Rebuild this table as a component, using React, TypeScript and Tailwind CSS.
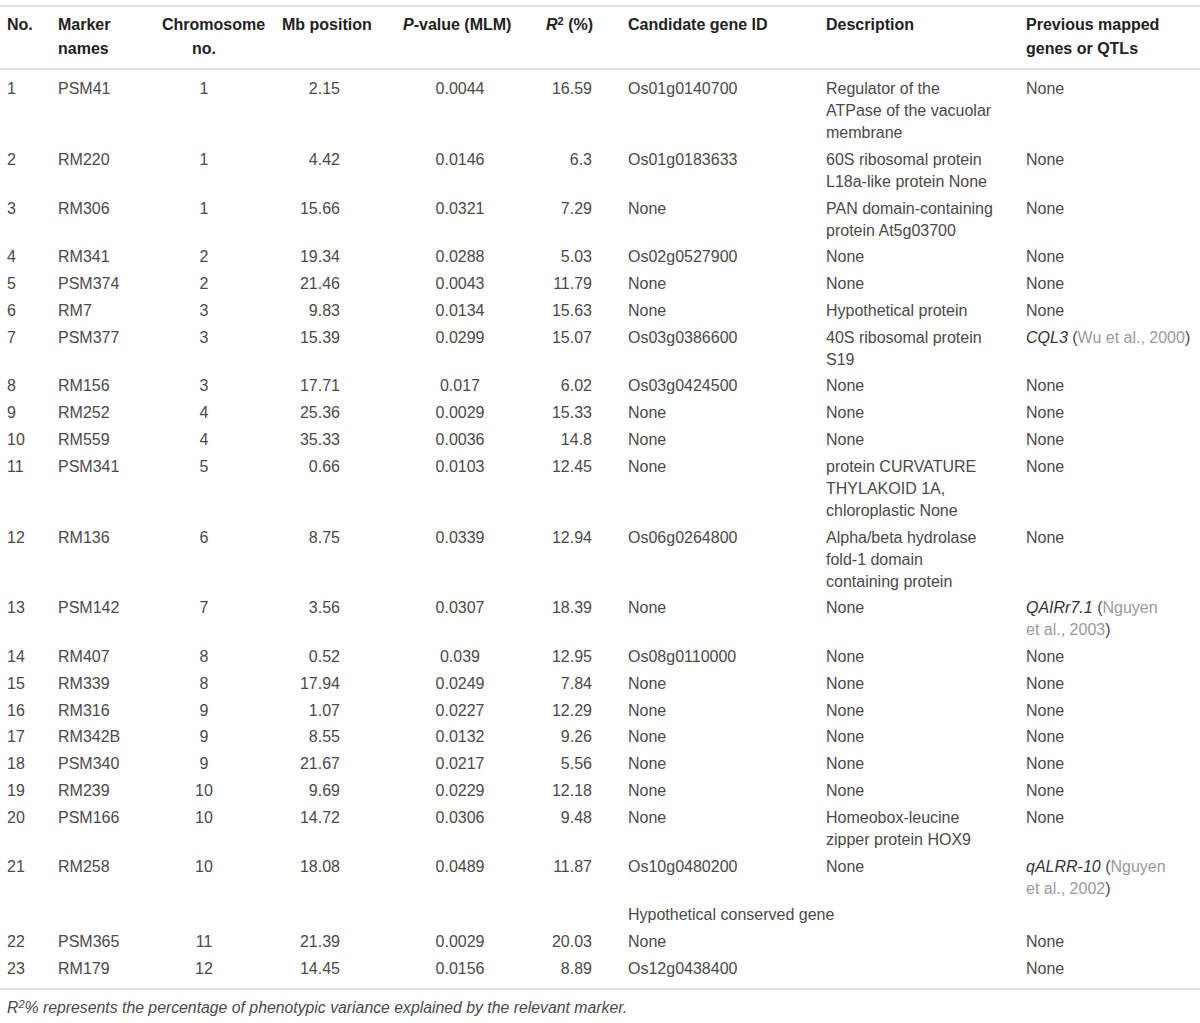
import React from "react";

type Row = {
  no: string;
  marker: string;
  chr: string;
  mb: string;
  p: string;
  r2: string;
  gene: string;
  desc: string[];
  prev: React.ReactNode;
};

const cols =
  "grid grid-cols-[51px_104px_120px_121px_143px_82px_198px_200px_1fr]";

const Cite = ({ gene, who, br }: { gene: string; who: string[]; br?: boolean }) => (
  <>
    <i className="text-[#333]">{gene}</i> (
    <span className="text-[#9a9a9a]">
      {who[0]}
      {br && <br />}
      {who[1]}
    </span>
    )
  </>
);

const rows: Row[] = [
  { no: "1", marker: "PSM41", chr: "1", mb: "2.15", p: "0.0044", r2: "16.59", gene: "Os01g0140700", desc: ["Regulator of the", "ATPase of the vacuolar", "membrane"], prev: "None" },
  { no: "2", marker: "RM220", chr: "1", mb: "4.42", p: "0.0146", r2: "6.3", gene: "Os01g0183633", desc: ["60S ribosomal protein", "L18a-like protein None"], prev: "None" },
  { no: "3", marker: "RM306", chr: "1", mb: "15.66", p: "0.0321", r2: "7.29", gene: "None", desc: ["PAN domain-containing", "protein At5g03700"], prev: "None" },
  { no: "4", marker: "RM341", chr: "2", mb: "19.34", p: "0.0288", r2: "5.03", gene: "Os02g0527900", desc: ["None"], prev: "None" },
  { no: "5", marker: "PSM374", chr: "2", mb: "21.46", p: "0.0043", r2: "11.79", gene: "None", desc: ["None"], prev: "None" },
  { no: "6", marker: "RM7", chr: "3", mb: "9.83", p: "0.0134", r2: "15.63", gene: "None", desc: ["Hypothetical protein"], prev: "None" },
  { no: "7", marker: "PSM377", chr: "3", mb: "15.39", p: "0.0299", r2: "15.07", gene: "Os03g0386600", desc: ["40S ribosomal protein", "S19"], prev: <Cite gene="CQL3" who={["Wu et al., 2000", ""]} /> },
  { no: "8", marker: "RM156", chr: "3", mb: "17.71", p: "0.017", r2: "6.02", gene: "Os03g0424500", desc: ["None"], prev: "None" },
  { no: "9", marker: "RM252", chr: "4", mb: "25.36", p: "0.0029", r2: "15.33", gene: "None", desc: ["None"], prev: "None" },
  { no: "10", marker: "RM559", chr: "4", mb: "35.33", p: "0.0036", r2: "14.8", gene: "None", desc: ["None"], prev: "None" },
  { no: "11", marker: "PSM341", chr: "5", mb: "0.66", p: "0.0103", r2: "12.45", gene: "None", desc: ["protein CURVATURE", "THYLAKOID 1A,", "chloroplastic None"], prev: "None" },
  { no: "12", marker: "RM136", chr: "6", mb: "8.75", p: "0.0339", r2: "12.94", gene: "Os06g0264800", desc: ["Alpha/beta hydrolase", "fold-1 domain", "containing protein"], prev: "None" },
  { no: "13", marker: "PSM142", chr: "7", mb: "3.56", p: "0.0307", r2: "18.39", gene: "None", desc: ["None"], prev: <Cite gene="QAIRr7.1" who={["Nguyen", "et al., 2003"]} br /> },
  { no: "14", marker: "RM407", chr: "8", mb: "0.52", p: "0.039", r2: "12.95", gene: "Os08g0110000", desc: ["None"], prev: "None" },
  { no: "15", marker: "RM339", chr: "8", mb: "17.94", p: "0.0249", r2: "7.84", gene: "None", desc: ["None"], prev: "None" },
  { no: "16", marker: "RM316", chr: "9", mb: "1.07", p: "0.0227", r2: "12.29", gene: "None", desc: ["None"], prev: "None" },
  { no: "17", marker: "RM342B", chr: "9", mb: "8.55", p: "0.0132", r2: "9.26", gene: "None", desc: ["None"], prev: "None" },
  { no: "18", marker: "PSM340", chr: "9", mb: "21.67", p: "0.0217", r2: "5.56", gene: "None", desc: ["None"], prev: "None" },
  { no: "19", marker: "RM239", chr: "10", mb: "9.69", p: "0.0229", r2: "12.18", gene: "None", desc: ["None"], prev: "None" },
  { no: "20", marker: "PSM166", chr: "10", mb: "14.72", p: "0.0306", r2: "9.48", gene: "None", desc: ["Homeobox-leucine", "zipper protein HOX9"], prev: "None" },
  { no: "21", marker: "RM258", chr: "10", mb: "18.08", p: "0.0489", r2: "11.87", gene: "Os10g0480200", desc: ["None"], prev: <Cite gene="qALRR-10" who={["Nguyen", "et al., 2002"]} br /> },
];

const tail: Row[] = [
  { no: "22", marker: "PSM365", chr: "11", mb: "21.39", p: "0.0029", r2: "20.03", gene: "None", desc: [], prev: "None" },
  { no: "23", marker: "RM179", chr: "12", mb: "14.45", p: "0.0156", r2: "8.89", gene: "Os12g0438400", desc: [], prev: "None" },
];

function DataRow({ r }: { r: Row }) {
  return (
    <div className={`${cols} py-[2.4px]`}>
      <div>{r.no}</div>
      <div>{r.marker}</div>
      <div className="w-[84px] text-center">{r.chr}</div>
      <div className="w-[58px] text-right">{r.mb}</div>
      <div className="w-[114px] text-center">{r.p}</div>
      <div className="w-[46px] text-right">{r.r2}</div>
      <div>{r.gene}</div>
      <div>
        {r.desc.map((d, i) => (
          <div key={i}>{d}</div>
        ))}
      </div>
      <div className="whitespace-nowrap">{r.prev}</div>
    </div>
  );
}

export default function App() {
  return (
    <div className="w-[1200px] bg-white pt-[5px] font-['Liberation_Sans',Arial,sans-serif] text-[16px]">
      <div className="border-t-2 border-[#e0e0e0]" />
      <div className={`${cols} pl-[7px] pt-[6px] pb-[7px] font-bold leading-[24px] text-[#222]`}>
        <div>No.</div>
        <div>
          Marker
          <br />
          names
        </div>
        <div>
          Chromosome
          <div className="pl-[30px]">no.</div>
        </div>
        <div>Mb position</div>
        <div>
          <i>P</i>-value (MLM)
        </div>
        <div>
          <i>R</i>
          <sup className="text-[11px]">2</sup> (%)
        </div>
        <div>Candidate gene ID</div>
        <div>Description</div>
        <div>
          Previous mapped
          <br />
          genes or QTLs
        </div>
      </div>
      <div className="border-t-2 border-[#e0e0e0]" />
      <div className="pl-[7px] pt-[5.6px] pb-[6px] leading-[22px] text-[#4a4a4a]">
        {rows.map((r) => (
          <DataRow key={r.no} r={r} />
        ))}
        <div className={`${cols} py-[2.4px]`}>
          <div className="col-start-7 col-span-3">Hypothetical conserved gene</div>
        </div>
        {tail.map((r) => (
          <DataRow key={r.no} r={r} />
        ))}
      </div>
      <div className="border-t-2 border-[#e0e0e0]" />
      <p className="pl-[7px] pt-[7px] pb-[5px] italic text-[15.8px] leading-[22px] text-[#4a4a4a]">
        R<sup className="text-[11px]">2</sup>% represents the percentage of phenotypic variance explained by the relevant marker.
      </p>
    </div>
  );
}
